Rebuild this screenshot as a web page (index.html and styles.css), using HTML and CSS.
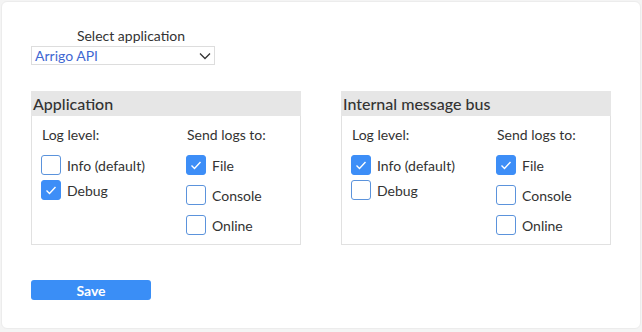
FILE: index.html
```html
<!doctype html>
<html>
<head>
	<title>Logging settings</title>
	<link rel="stylesheet" href="styles.css">
</head>
<body>
	<div class="card">
		<div class="picker">
			<div class="picker-label">Select application</div>
			<div class="select">
				<span class="select-value">Arrigo API</span>
				<svg class="chevron" width="12" height="8" viewBox="0 0 12 8"><polyline points="1,1.5 6,6.5 11,1.5" fill="none" stroke="#333" stroke-width="1.3"/></svg>
			</div>
		</div>

		<div class="panels">
			<div class="panel">
				<div class="panel-head">Application</div>
				<div class="panel-body">
					<div class="col col-level">
						<div class="col-title">Log level:</div>
						<div class="opt"><span class="box"></span>Info (default)</div>
						<div class="opt"><span class="box on"><svg width="20" height="20" viewBox="0 0 20 20"><polyline points="5.5,10.5 8.5,13.5 14.5,7" fill="none" stroke="#fff" stroke-width="1.4"/></svg></span>Debug</div>
					</div>
					<div class="col col-target">
						<div class="col-title">Send logs to:</div>
						<div class="opt"><span class="box on"><svg width="20" height="20" viewBox="0 0 20 20"><polyline points="5.5,10.5 8.5,13.5 14.5,7" fill="none" stroke="#fff" stroke-width="1.4"/></svg></span>File</div>
						<div class="opt"><span class="box"></span>Console</div>
						<div class="opt"><span class="box"></span>Online</div>
					</div>
				</div>
			</div>

			<div class="panel">
				<div class="panel-head">Internal message bus</div>
				<div class="panel-body">
					<div class="col col-level">
						<div class="col-title">Log level:</div>
						<div class="opt"><span class="box on"><svg width="20" height="20" viewBox="0 0 20 20"><polyline points="5.5,10.5 8.5,13.5 14.5,7" fill="none" stroke="#fff" stroke-width="1.4"/></svg></span>Info (default)</div>
						<div class="opt"><span class="box"></span>Debug</div>
					</div>
					<div class="col col-target">
						<div class="col-title">Send logs to:</div>
						<div class="opt"><span class="box on"><svg width="20" height="20" viewBox="0 0 20 20"><polyline points="5.5,10.5 8.5,13.5 14.5,7" fill="none" stroke="#fff" stroke-width="1.4"/></svg></span>File</div>
						<div class="opt"><span class="box"></span>Console</div>
						<div class="opt"><span class="box"></span>Online</div>
					</div>
				</div>
			</div>
		</div>

		<button class="save">Save</button>
	</div>
</body>
</html>
```

FILE: styles.css
```css
body {
	margin: 0;
	padding: 1px;
	background-color: #f4f4f4;
	color: #333;
	font-family: Lato, "Liberation Sans", sans-serif;
	font-size: 14px;
}

.card {
	height: 328px;
	box-sizing: border-box;
	background-color: #fff;
	border: 1px solid #ececec;
	border-radius: 6px;
	padding: 26px 0 0 29px;
}

.picker-label {
	width: 200px;
	text-align: center;
	line-height: 16px;
	margin-bottom: 2px;
}

.select {
	width: 184px;
	height: 19px;
	box-sizing: border-box;
	border: 1px solid #ddd;
	display: flex;
	align-items: center;
	justify-content: space-between;
	padding: 0 3px 0 3px;
	font-size: 14px;
}

.select-value {
	color: #3f68d2;
}

.panels {
	display: flex;
	gap: 40px;
	margin-top: 26px;
}

.panel {
	width: 270px;
}

.panel-head {
	height: 25px;
	background-color: #e6e6e6;
	padding-left: 2px;
	font-size: 16px;
	font-weight: 500;
	line-height: 25px;
}

.panel-body {
	display: flex;
	border: 1px solid #e1e1e1;
	border-top: none;
	padding: 11px 0 9px 9px;
}

.col-level {
	width: 145px;
}

.col-title {
	line-height: 16px;
	margin-bottom: 12px;
	padding-left: 1px;
}

.opt {
	display: flex;
	align-items: center;
	gap: 6px;
	height: 20px;
}

.col-level .opt + .opt {
	margin-top: 5px;
}

.col-target .opt + .opt {
	margin-top: 10px;
}

.box {
	width: 20px;
	height: 20px;
	box-sizing: border-box;
	border: 1px solid #5b93dc;
	border-radius: 3px;
	flex: none;
}

.box.on {
	background-color: #3d8ef7;
	border-color: #3d8ef7;
}

.box svg {
	display: block;
	margin: -1px;
}

.save {
	display: block;
	margin-top: 35px;
	width: 120px;
	height: 20px;
	border: none;
	border-radius: 3px;
	background-color: #3a8ef6;
	color: #fff;
	font-family: inherit;
	font-size: 14px;
	font-weight: bold;
	padding: 0;
}
```
